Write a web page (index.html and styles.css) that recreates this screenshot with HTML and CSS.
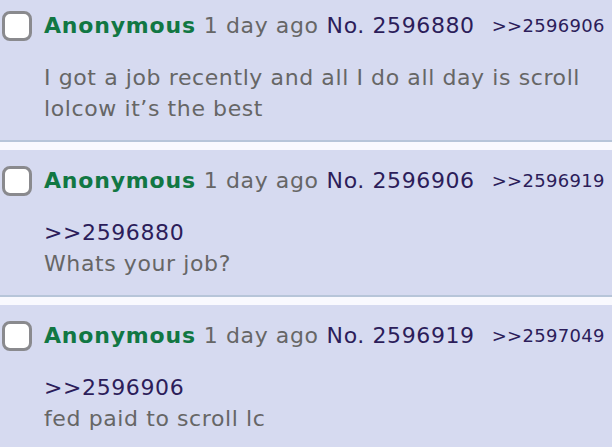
FILE: index.html
```html
<!DOCTYPE html>
<html>
<head>
<meta charset="utf-8">
<link rel="stylesheet" href="styles.css">
</head>
<body>
<div class="thread">
  <div class="post">
    <div class="head">
      <span class="check"></span>
      <span class="name">Anonymous</span>
      <span class="date">1 day ago</span>
      <span class="no">No. 2596880</span>
      <span class="backlink">&gt;&gt;2596906</span>
    </div>
    <div class="body">I got a job recently and all I do all day is scroll<br>lolcow it’s the best</div>
  </div>
  <div class="post">
    <div class="head">
      <span class="check"></span>
      <span class="name">Anonymous</span>
      <span class="date">1 day ago</span>
      <span class="no">No. 2596906</span>
      <span class="backlink">&gt;&gt;2596919</span>
    </div>
    <div class="body"><span class="quote">&gt;&gt;2596880</span><br>Whats your job?</div>
  </div>
  <div class="post">
    <div class="head">
      <span class="check"></span>
      <span class="name">Anonymous</span>
      <span class="date">1 day ago</span>
      <span class="no">No. 2596919</span>
      <span class="backlink">&gt;&gt;2597049</span>
    </div>
    <div class="body"><span class="quote">&gt;&gt;2596906</span><br>fed paid to scroll lc</div>
  </div>
</div>
</body>
</html>
```
FILE: styles.css
```css
html, body {
  margin: 0;
  padding: 0;
  background: #f9f9fe;
  font-family: "DejaVu Sans", Verdana, sans-serif;
  font-size: 22px;
  line-height: 31px;
  color: #666666;
  overflow: hidden;
}
.thread {
  margin-top: -5px;
  display: flex;
  flex-direction: column;
  gap: 8px;
}
.post {
  background: #d6daf0;
  border-bottom: 2px solid #b7c5d9;
  padding: 15px 0 16px 2px;
}
.head {
  display: flex;
  align-items: center;
  white-space: nowrap;
  letter-spacing: 0.6px;
}
.check {
  box-sizing: border-box;
  width: 30px;
  height: 30px;
  border: 3px solid #8a8a8e;
  border-radius: 8px;
  background: #ffffff;
  margin-right: 12px;
  flex: none;
}
.name {
  color: #117743;
  font-weight: bold;
  letter-spacing: 0.8px;
  margin-right: 8px;
}
.date {
  margin-right: 8px;
}
.no {
  color: #2c1d5a;
  margin-right: 17px;
}
.backlink {
  color: #2c1d5a;
  font-size: 18px;
  letter-spacing: 0.3px;
}
.body {
  margin-top: 21px;
  padding-left: 42px;
  letter-spacing: 0.6px;
}
.quote {
  color: #2c1d5a;
}
```
